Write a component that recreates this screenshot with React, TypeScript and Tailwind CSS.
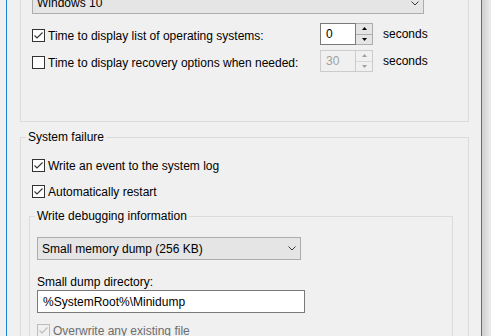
import React from 'react';

type CheckProps = { checked?: boolean; disabled?: boolean };

const Check = ({ checked, disabled }: CheckProps) => (
    <span
        className={`flex h-[13px] w-[13px] shrink-0 items-center justify-center border ${
            disabled ? 'border-[#bcbcbc] bg-[#f0f0f0]' : 'border-[#333333] bg-white'
        }`}
    >
        {checked && (
            <svg width="11" height="11" viewBox="0 0 11 11">
                <path
                    d="M1.5 5.5 L4 8 L9.5 2.5"
                    fill="none"
                    stroke={disabled ? '#bcbcbc' : '#333333'}
                    strokeWidth="1.1"
                />
            </svg>
        )}
    </span>
);

const CheckRow = ({ label, checked, disabled, className = '' }: CheckProps & { label: string; className?: string }) => (
    <div className={`flex h-[13px] items-center gap-[3px] ${className}`}>
        <Check checked={checked} disabled={disabled} />
        <span className={`whitespace-nowrap leading-[16px] ${disabled ? 'text-[#6d6d6d]' : 'text-black'}`}>{label}</span>
    </div>
);

const Chevron = () => (
    <svg width="8" height="5" viewBox="0 0 8 5" className="shrink-0">
        <path d="M0.5 0.5 L4 4 L7.5 0.5" fill="none" stroke="#3a3a3a" strokeWidth="1" />
    </svg>
);

const Combo = ({ text, className = '' }: { text: string; className?: string }) => (
    <div className={`flex items-center justify-between border border-[#adadad] bg-[#e5e5e5] pl-[4px] pr-[4px] ${className}`}>
        <span className="whitespace-nowrap leading-[16px]">{text}</span>
        <Chevron />
    </div>
);

const Tri = ({ up, color }: { up?: boolean; color: string }) => (
    <svg width="5" height="3" viewBox="0 0 5 3">
        <path d={up ? 'M2.5 0 L5 3 L0 3 Z' : 'M0 0 L5 0 L2.5 3 Z'} fill={color} />
    </svg>
);

const Spin = ({ value, disabled }: { value: string; disabled?: boolean }) => (
    <div className="flex h-[22px] w-[53px] shrink-0">
        <div
            className={`flex w-[36px] items-center border pl-[5px] leading-[16px] ${
                disabled ? 'border-[#cccccc] bg-[#f0f0f0] text-[#a0a0a0]' : 'border-[#7a7a7a] bg-white text-black'
            }`}
        >
            {value}
        </div>
        <div
            className={`flex w-[17px] flex-col border border-l-0 bg-[#f0f0f0] ${
                disabled ? 'border-[#cccccc]' : 'border-[#adadad]'
            }`}
        >
            <div
                className={`flex flex-1 items-center justify-center border-b ${
                    disabled ? 'border-[#d9d9d9] bg-[#f0f0f0]' : 'border-[#adadad] bg-[#e5e5e5]'
                }`}
            >
                <Tri up color={disabled ? '#a0a0a0' : '#000000'} />
            </div>
            <div className={`flex flex-1 items-center justify-center ${disabled ? 'bg-[#f0f0f0]' : 'bg-[#e5e5e5]'}`}>
                <Tri color={disabled ? '#a0a0a0' : '#000000'} />
            </div>
        </div>
    </div>
);

const TimeRow = ({ label, value, checked, disabled, className = '' }: { label: string; value: string; checked?: boolean; disabled?: boolean; className?: string }) => (
    <div className={`flex h-[22px] items-start ${className}`}>
        <div className="mt-[6px] w-[288px] shrink-0">
            <CheckRow label={label} checked={checked} />
        </div>
        <Spin value={value} disabled={disabled} />
        <span className="ml-[10px] mt-[3px] leading-[16px]">seconds</span>
    </div>
);

export default function App() {
    return (
        <div className="flex h-[336px] w-[491px] overflow-hidden bg-[#f0f0f0] font-['Liberation_Sans',Arial,sans-serif] text-[12px] text-black">
            <div className="w-[6px] shrink-0" />
            <div className="w-px shrink-0 bg-[#1883d7]" />

            <div className="flex w-[474px] shrink-0 flex-col pl-[13px]">
                {/* System startup (top is scrolled off) */}
                <div className="flex w-[449px] flex-col border-x border-b border-[#dcdcdc] pb-[49px] pl-[11px]">
                    <Combo className="-mt-[8px] h-[22px] w-[392px]" text="Windows 10" />
                    <TimeRow className="mt-[9px]" label="Time to display list of operating systems:" value="0" checked />
                    <TimeRow className="mt-[5px]" label="Time to display recovery options when needed:" value="30" disabled />
                </div>

                {/* System failure */}
                <fieldset className="mt-[7px] w-[449px] border border-[#dcdcdc] pb-[20px]">
                    <legend className="ml-[5px] px-[2px] leading-[16px]">System failure</legend>
                    <div className="flex flex-col pl-[11px]">
                        <CheckRow className="mt-[14px]" label="Write an event to the system log" checked />
                        <CheckRow className="mt-[13px]" label="Automatically restart" checked />
                    </div>

                    <fieldset className="ml-[8px] mr-[15px] mt-[10px] border border-[#dcdcdc] pb-[20px]">
                        <legend className="ml-[5px] px-[2px] leading-[16px]">Write debugging information</legend>
                        <div className="flex flex-col pl-[7px]">
                            <Combo className="mt-[13px] h-[23px] w-[264px]" text="Small memory dump (256 KB)" />
                            <span className="mt-[15px] leading-[15px]">Small dump directory:</span>
                            <div className="flex h-[23px] w-[268px] items-center border border-[#7a7a7a] bg-white pl-[5px] leading-[16px]">
                                {'%SystemRoot%\\Minidump'}
                            </div>
                            <CheckRow className="mt-[11px]" label="Overwrite any existing file" checked disabled />
                        </div>
                    </fieldset>
                </fieldset>
            </div>

            <div className="w-px shrink-0 bg-[#1883d7]" />
            <div className="w-[9px] shrink-0 bg-linear-to-r from-[#cfcfcf] to-[#ececec]" />
        </div>
    );
}
